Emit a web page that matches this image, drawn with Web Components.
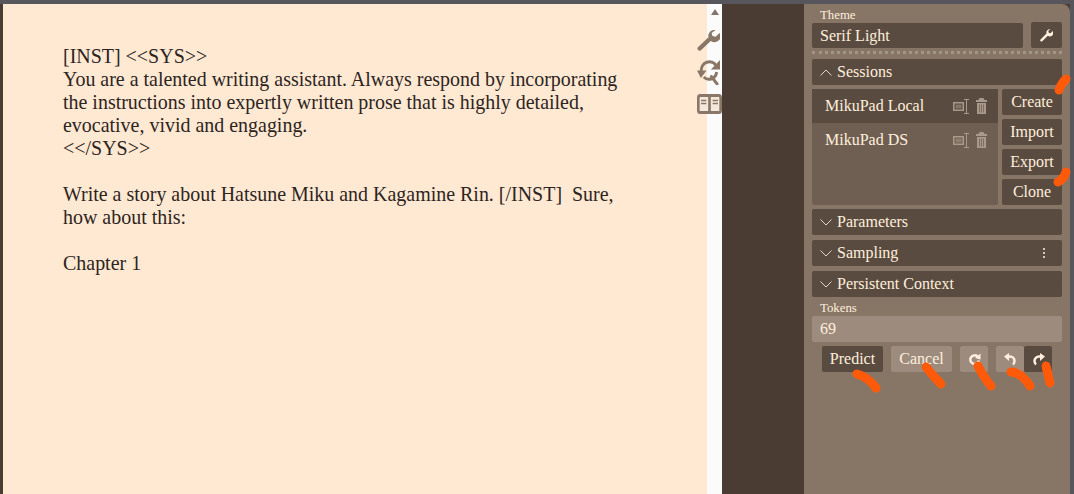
<!DOCTYPE html>
<html lang="en">
<head>
<meta charset="utf-8">
<title>MikuPad</title>
<style>
    html, body {
        background: #4a3c33;
        height: 100%;
        margin: 0;
        overflow: hidden;
    }

    body {
        font-family: "Liberation Serif", serif;
    }
</style>
</head>
<body>
<app-shell>
    <editor-pane slot="editor">[INST] &lt;&lt;SYS&gt;&gt;
You are a talented writing assistant. Always respond by incorporating the instructions into expertly written prose that is highly detailed, evocative, vivid and engaging.
&lt;&lt;/SYS&gt;&gt;

Write a story about Hatsune Miku and Kagamine Rin. [/INST]  Sure, how about this:

Chapter 1</editor-pane>
    <side-bar slot="sidebar"></side-bar>
</app-shell>
<script>
const icons = {
    wrench: `<path fill="currentColor" d="M25.500 3.500 21 8l-3.500-1-1-3.500L21 0a7 7 0 0 0-8 8.500L1 20.500A2.500 2.500 0 0 0 4.500 24L15.500 13a7 7 0 0 0 10-9.500z"/>`,
    refresh: `<path fill="none" stroke="currentColor" stroke-width="3" d="M4.500 12a8.500 8.500 0 0 1 15.500-5.500"/><path fill="currentColor" d="M24 1v9.500h-9.500z"/><path fill="none" stroke="currentColor" stroke-width="3" d="M20.500 13a8 8 0 0 1-13.500 5"/><path fill="currentColor" d="M0 11.500h10L4 19z"/><path fill="none" stroke="currentColor" stroke-width="3" stroke-linecap="round" d="M15 17.500l6 7.500"/>`,
    book: `<rect x="1.500" y="1.500" width="25" height="17" rx="2" fill="#f4e8dc" stroke="currentColor" stroke-width="3"/><path stroke="currentColor" stroke-width="3" d="M14 1.500v17"/><path stroke="currentColor" stroke-width="1.300" d="M4.500 6.500h6M4.500 9.500h6M17.500 6.500h6M17.500 9.500h6"/>`,
    rename: `<path fill="none" stroke="currentColor" stroke-width="1.500" d="M.75 3.750h9.500v7.500H.75z"/><path fill="currentColor" opacity=".55" d="M2.500 5.500h6v4h-6z"/><path fill="none" stroke="currentColor" d="M11 .5h5M13.500 .5v14M11 14.500h5"/>`,
    trash: `<path fill="currentColor" d="M3.500 0h4l1 2h2.500v2H0V2h2.500zM1 5h9v11H1z"/><path stroke="#5a4b40" stroke-opacity=".55" d="M3.500 6.500v8M5.500 6.500v8M7.500 6.500v8"/>`
};

customElements.define("app-shell", class extends HTMLElement {
    constructor() {
        super();
        this.attachShadow({ mode: "open" });
    }

    connectedCallback() {
        this.shadowRoot.innerHTML = `
<style>
    :host {
        background: #56565c;
        display: block;
        height: 494px;
        padding-top: 4px;
        box-sizing: border-box;
        position: relative;
    }

    .columns {
        background: #4a3c33;
        display: grid;
        grid-template-columns: 3px 719px 82px 266px 4px;
        height: 490px;
    }

    .gutter {
        background: #56565c;
    }
</style>
<div class="columns">
    <div></div>
    <slot name="editor"></slot>
    <div></div>
    <slot name="sidebar"></slot>
    <div class="gutter"></div>
</div>
<scribble-marks></scribble-marks>`;
    }
});

customElements.define("editor-pane", class extends HTMLElement {
    constructor() {
        super();
        this.attachShadow({ mode: "open" });
    }

    connectedCallback() {
        this.shadowRoot.innerHTML = `
<style>
    :host {
        background: #ffe9d2;
        color: #2d241e;
        display: grid;
        font: 19.970px/23px "Liberation Serif", serif;
        grid-template-columns: 704px 15px;
        height: 490px;
        position: relative;
    }

    .text {
        box-sizing: border-box;
        padding: 41px 85px 0 60px;
        white-space: pre-wrap;
    }

    .track {
        background: #fbfbfb;
        display: flex;
        justify-content: center;
        padding-top: 5px;
    }

    .arrow {
        border-bottom: 6px solid #82756b;
        border-left: 4.500px solid transparent;
        border-right: 4.500px solid transparent;
        height: 0;
        width: 0;
    }

    .tools {
        color: #8a7768;
        display: flex;
        flex-direction: column;
        gap: 9px;
        left: 694px;
        position: absolute;
        top: 26px;
    }

    svg {
        display: block;
    }
</style>
<div class="text"><slot></slot></div>
<div class="track"><div class="arrow"></div></div>
<div class="tools">
    <svg width="23" height="21" viewBox="0 0 26 25" preserveAspectRatio="none">${icons.wrench}</svg>
    <svg width="23" height="25" viewBox="0 1 24 25" preserveAspectRatio="none">${icons.refresh}</svg>
    <svg width="25" height="20" viewBox="0 0 28 20" preserveAspectRatio="none">${icons.book}</svg>
</div>`;
    }
});

customElements.define("ui-button", class extends HTMLElement {
    constructor() {
        super();
        this.attachShadow({ mode: "open" });
    }

    connectedCallback() {
        this.shadowRoot.innerHTML = `
<style>
    :host {
        align-items: center;
        background: #5a4b40;
        border-radius: 2px;
        color: #ffefdd;
        display: flex;
        font-size: 16px;
        height: 26px;
        justify-content: center;
    }

    :host([muted]) {
        background: #9d8c7d;
    }
</style>
<slot></slot>`;
    }
});

customElements.define("collapse-bar", class extends HTMLElement {
    constructor() {
        super();
        this.attachShadow({ mode: "open" });
    }

    connectedCallback() {
        const open = this.hasAttribute("open");
        const menu = this.hasAttribute("menu");
        this.shadowRoot.innerHTML = `
<style>
    :host {
        align-items: center;
        background: #5a4b40;
        border-radius: 2px;
        color: #ffefdd;
        display: flex;
        font-size: 16px;
        gap: 5px;
        height: 26px;
        padding: 0 8px;
    }

    svg {
        flex: none;
    }

    .label {
        flex: 1;
    }

    .dots {
        display: flex;
        flex-direction: column;
        gap: 2px;
        margin-right: 9px;
    }

    .dots i {
        background: #ffefdd;
        border-radius: 50%;
        height: 2px;
        width: 2px;
    }
</style>
<svg width="12" height="7" viewBox="0 0 12 7">
    <path fill="none" stroke="#e3d5c6" d="${open ? "M.5 6.500 6 1l5.500 5.500" : "M.5.5 6 6l5.500-5.500"}"/>
</svg>
<span class="label"><slot></slot></span>
${menu ? `<span class="dots"><i></i><i></i><i></i></span>` : ""}`;
    }
});

customElements.define("session-item", class extends HTMLElement {
    constructor() {
        super();
        this.attachShadow({ mode: "open" });
    }

    connectedCallback() {
        this.shadowRoot.innerHTML = `
<style>
    :host {
        align-items: center;
        color: #ffefdd;
        display: flex;
        font-size: 16px;
        height: 34px;
        padding: 0 11px 0 13px;
    }

    :host([active]) {
        background: #5a4b40;
    }

    .label {
        flex: 1;
    }

    .icons {
        align-items: center;
        color: #a8998b;
        display: flex;
        gap: 7px;
    }

    svg {
        display: block;
    }
</style>
<span class="label"><slot></slot></span>
<span class="icons">
    <svg width="16" height="15" viewBox="0 0 16 15">${icons.rename}</svg>
    <svg width="11" height="16" viewBox="0 0 11 16">${icons.trash}</svg>
</span>`;
    }
});

customElements.define("side-bar", class extends HTMLElement {
    constructor() {
        super();
        this.attachShadow({ mode: "open" });
    }

    connectedCallback() {
        this.shadowRoot.innerHTML = `
<style>
    :host {
        background: #877566;
        border-top-right-radius: 8px;
        box-sizing: border-box;
        color: #ffefdd;
        display: flex;
        flex-direction: column;
        font-size: 16px;
        height: 490px;
        padding: 5px 8px 0;
    }

    .caption {
        font-size: 12.800px;
        height: 14px;
        line-height: 13px;
        padding-left: 8px;
    }

    .theme {
        display: grid;
        gap: 8px;
        grid-template-columns: 1fr 31px;
    }

    .select {
        align-items: center;
        background: #5a4b40;
        border-radius: 2px;
        display: flex;
        height: 25px;
        padding-left: 8px;
    }

    .theme ui-button {
        margin-top: -1px;
    }

    .dotted {
        border-top: 3px dotted #a39586;
        margin: 3px 0 5px;
    }

    .sessions {
        display: grid;
        gap: 4px;
        grid-template-columns: 1fr 60px;
        margin: 4px 0;
    }

    .list {
        background: #6f5f52;
        border-radius: 2px;
    }

    .actions {
        display: flex;
        flex-direction: column;
        gap: 4px;
    }

    .stack {
        display: flex;
        flex-direction: column;
        gap: 5px;
    }

    .tokens {
        align-items: center;
        background: #9d8c7d;
        border-radius: 2px;
        display: flex;
        height: 26px;
        padding-left: 8px;
    }

    .controls {
        display: flex;
        margin-top: 4px;
        padding-left: 10px;
    }

    .controls ui-button svg {
        display: block;
    }

    .tight {
        width: 28px;
    }

    .wide {
        width: 61px;
    }
</style>
<div class="caption">Theme</div>
<div class="theme">
    <div class="select">Serif Light</div>
    <ui-button>
        <svg width="13" height="13" viewBox="0 0 26 25" color="#ffefdd">${icons.wrench}</svg>
    </ui-button>
</div>
<div class="dotted"></div>
<collapse-bar open>Sessions</collapse-bar>
<div class="sessions">
    <div class="list">
        <session-item active>MikuPad Local</session-item>
        <session-item>MikuPad DS</session-item>
    </div>
    <div class="actions">
        <ui-button>Create</ui-button>
        <ui-button>Import</ui-button>
        <ui-button>Export</ui-button>
        <ui-button>Clone</ui-button>
    </div>
</div>
<div class="stack">
    <collapse-bar>Parameters</collapse-bar>
    <collapse-bar menu>Sampling</collapse-bar>
    <collapse-bar>Persistent Context</collapse-bar>
</div>
<div class="caption" style="margin-top:4px;height:15px;line-height:14px">Tokens</div>
<div class="tokens">69</div>
<div class="controls">
    <ui-button class="wide">Predict</ui-button>
    <ui-button class="wide" muted style="margin-left:8px">Cancel</ui-button>
    <ui-button class="tight" muted style="margin-left:8px">
        <svg width="13" height="13" viewBox="0 0 13 13"><path fill="none" stroke="#ffefdd" stroke-width="2.500" d="M9.500 3.500a4.300 4.300 0 1 0 1.300 4"/><path fill="#ffefdd" d="M7 5l5.500 1.500V.5z"/></svg>
    </ui-button>
    <ui-button class="tight" muted style="margin-left:8px">
        <svg width="13" height="13" viewBox="0 0 13 13"><path fill="none" stroke="#ffefdd" stroke-width="2.500" d="M4 3.500h2a4.500 4.500 0 0 1 4.500 4.500q0 2-1.500 3.500"/><path fill="#ffefdd" d="M5 0v8L0 3.500z"/></svg>
    </ui-button>
    <ui-button class="tight">
        <svg width="13" height="13" viewBox="0 0 13 13"><path fill="none" stroke="#ffefdd" stroke-width="2.500" d="M9 3.500H7A4.500 4.500 0 0 0 2.500 8q0 2 1.500 3.500"/><path fill="#ffefdd" d="M8 0v8l5-4.500z"/></svg>
    </ui-button>
</div>`;
    }
});

// orange marker strokes drawn over the sidebar
customElements.define("scribble-marks", class extends HTMLElement {
    constructor() {
        super();
        this.attachShadow({ mode: "open" });
    }

    connectedCallback() {
        this.shadowRoot.innerHTML = `
<style>
    :host {
        display: block;
        height: 494px;
        left: 0;
        pointer-events: none;
        position: absolute;
        top: 0;
        width: 1074px;
    }
</style>
<svg width="1074" height="494" fill="none" stroke="#ff5a0a" stroke-width="9" stroke-linecap="round">
    <path d="M1059 90q2-6 7-11"/>
    <path d="M1058 182q6-3 8-10"/>
    <path d="M857 374q11 3 19 14"/>
    <path d="M926 367q7 9 15 17"/>
    <path d="M978 366q6 12 13 20"/>
    <path d="M1011 372q10 0 19 14"/>
    <path d="M1046 366l4 17"/>
</svg>`;
    }
});
</script>
</body>
</html>
